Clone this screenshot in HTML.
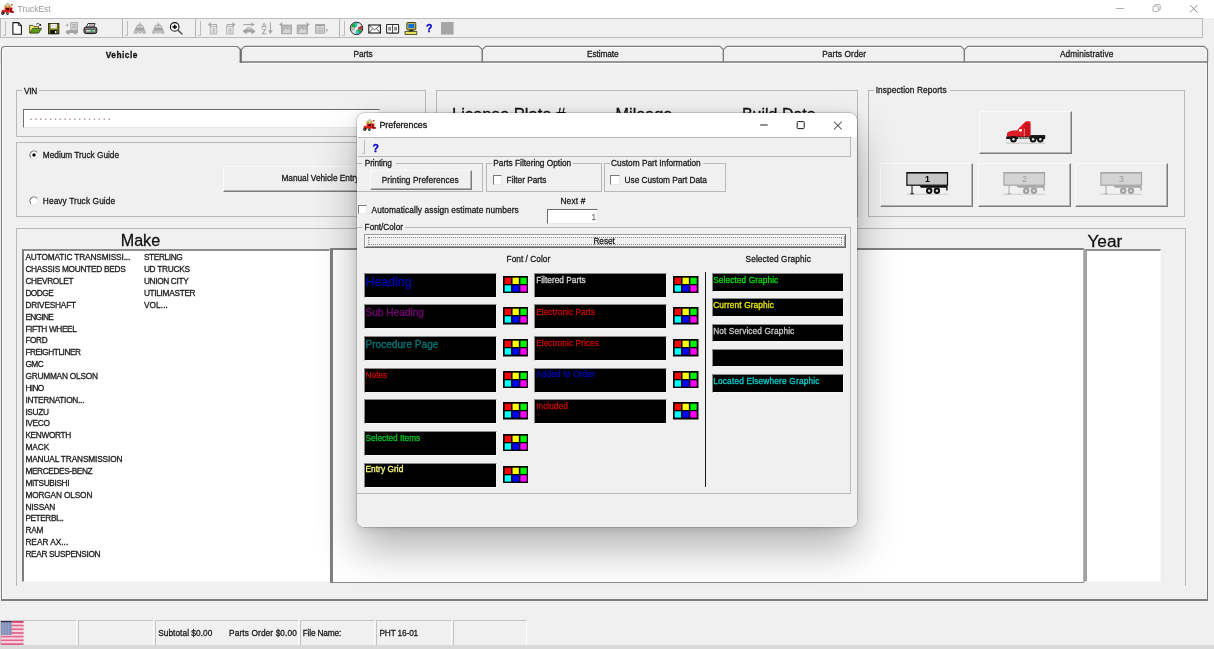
<!DOCTYPE html>
<html lang="en">
<head>
<meta charset="utf-8">
<title>TruckEst</title>
<style>
*{box-sizing:border-box;margin:0;padding:0}
html,body{width:1214px;height:649px;overflow:hidden;background:#f0f0f0}
body{position:relative;font-family:"Liberation Sans",sans-serif;font-size:8.2px;color:#1a1a1a;line-height:10px}
#root{position:absolute;left:0;top:0;width:1214px;height:649px;overflow:hidden;will-change:transform;background:#f0f0f0}
.a{position:absolute}
.t{position:absolute;white-space:nowrap;-webkit-text-stroke:.28px currentColor}
#titlebar{left:0;top:0;width:1214px;height:18px;background:#fff}
#titlebar .ttl{left:17.5px;top:4px;font-size:8.5px;line-height:11px;color:#989898;-webkit-text-stroke:0}
#toolbar{left:0;top:18px;width:1203px;height:20px;background:#f0f0f0;border:1px solid #bcbcbc}
.grip{position:absolute;top:21px;width:3px;height:14.5px;border-right:1.5px solid #bdbdbd;border-bottom:1px solid #c4c4c4}
.tsep{position:absolute;top:19px;width:1px;height:18px;background:#b4b4b4}
#panel{left:.5px;top:62px;width:1207.5px;height:538.5px;border-left:1px solid #7c7c7c;border-right:1.5px solid #7a7a7a;border-bottom:2px solid #7e7e7e;box-shadow:inset 1px 0 0 #fcfcfc}
.gb{position:absolute;border:1px solid #b8b8b8}
.gb>.lg{position:absolute;top:-5.5px;left:6.5px;background:#f0f0f0;padding:0 1px;white-space:nowrap;line-height:10px}
.sunk{position:absolute;background:#fff;border-top:1px solid #6a6a6a;border-left:1px solid #6a6a6a;border-right:1px solid #e8e8e8;border-bottom:1px solid #e8e8e8}
.btn{position:absolute;background:#f0f0f0;border-top:1px solid #fafafa;border-left:1px solid #fafafa;border-right:1px solid #8a8a8a;border-bottom:1px solid #8a8a8a;text-align:center;white-space:nowrap}
.cb{position:absolute;width:9.5px;height:9.5px;background:#fff;border:1.3px solid #7a7a7a;border-right:1px solid #e8e8e8;border-bottom:1px solid #e8e8e8}
.sp{position:absolute;top:620px;height:25px;border-left:1px solid #c4c4c4;border-top:1px solid #c4c4c4;border-right:1px solid #fff;line-height:24px;padding-left:3px;white-space:nowrap}
#dialog{left:357px;top:113px;width:500px;height:413.5px;background:#fff;border-radius:7px;overflow:hidden;box-shadow:0 0 0 .5px rgba(0,0,0,.28),0 22px 42px rgba(0,0,0,.30),0 1px 8px rgba(0,0,0,.13)}
#dialog .grip{top:27px}
.bk{position:absolute;background:#000;border-top:1px solid #8a8a8a;border-left:1px solid #8a8a8a;border-right:1px solid #f4f4f4;border-bottom:1px solid #f4f4f4;white-space:nowrap;padding-left:1px;font-size:8.2px;line-height:1.15;overflow:hidden}
.lgm{position:absolute;top:-2px;height:3px;background:#f0f0f0}
.b2{border-right:1px solid #7c7c7c;border-bottom:1px solid #7c7c7c;box-shadow:inset -1px -1px 0 #b4b4b4}

</style>
</head>
<body>
<div id="root">
<!-- ===== main window ===== -->
<div id="titlebar" class="a"><svg class="a" style="left:1px;top:2px" width="14" height="14" viewBox="0 0 14 14">
<path d="M4.2 2.9 L6.7 .4 L9.3 2.9 Z" fill="#bdbdb8"/>
<path d="M3.2 2.7 H10 L10.4 5.9 H2.9 Z" fill="#e6dc84"/>
<rect x="4.4" y="3.6" width="1.2" height="1.2" fill="#5a5a30"/><rect x="7.6" y="3.6" width="1.2" height="1.2" fill="#5a5a30"/>
<path d="M10 1.9 H11.5 V3.6 H10 Z" fill="#e23030"/>
<path d="M3.6 5.4 H11.4 V10.4 H3.6 Z" fill="#e01c1c"/>
<path d="M5.4 6 H8 V8 H5.4 Z" fill="#3a1010"/>
<path d="M9.4 6 H11 V9.2 H13 V10.8 H9.4 Z" fill="#d81818"/>
<path d="M9.8 6.4 V9.8 H12.6" fill="none" stroke="#300" stroke-width=".7"/>
<path d="M.6 8.2 Q2.4 7.2 4 8.4 V11 H.6 Z" fill="#d42020"/>
<circle cx="1.8" cy="11.3" r="1.6" fill="#1c1c1c"/><circle cx="1.8" cy="11.3" r=".55" fill="#b8b8b8"/>
<circle cx="6.4" cy="11.6" r="1.4" fill="#1c1c1c"/><circle cx="6.4" cy="11.6" r=".5" fill="#b8b8b8"/>
</svg><span class="t ttl">TruckEst</span>
<svg class="a" style="left:1110px;top:0" width="104" height="18" viewBox="0 0 104 18"><path d="M6 8.5 H14" stroke="#9a9a9a" stroke-width=".8"/><rect x="43" y="6.2" width="5.4" height="5.4" rx="1" fill="none" stroke="#9a9a9a" stroke-width=".8"/><path d="M44.6 6 V5.2 Q44.6 4.6 45.4 4.6 H49.4 Q50.2 4.6 50.2 5.4 V9.4 Q50.2 10 49.4 10 H48.6" fill="none" stroke="#9a9a9a" stroke-width=".8"/><path d="M80 5 L87.4 12.4 M87.4 5 L80 12.4" stroke="#777" stroke-width=".8"/></svg>
</div>
<div id="toolbar" class="a"></div>
<div class="grip" style="left:3px"></div>
<div class="grip" style="left:125px"></div>
<div class="grip" style="left:198px"></div>
<div class="grip" style="left:342px"></div>
<div class="tsep" style="left:122px"></div>
<div class="tsep" style="left:195px"></div>
<div class="tsep" style="left:339px"></div>
<svg class="a" style="left:0;top:18px" width="460" height="20" viewBox="0 18 460 20"><path d="M12.9 22.6 H18.4 L21.4 25.6 V34.2 H12.9 Z" fill="#fff" stroke="#141414" stroke-width="1.1" stroke-linejoin="round"/><path d="M18.4 22.6 V25.6 H21.4" fill="none" stroke="#141414" stroke-width=".8"/><path d="M29.6 25.4 H33 L34 26.6 H38.6 V32.8 H29.6 Z" fill="#ece874" stroke="#3c3c10" stroke-width=".8" stroke-linejoin="round"/><path d="M29.8 33 L32.6 28.4 H41.6 L38.6 33 Z" fill="#5c9a1c" stroke="#2c4410" stroke-width=".8" stroke-linejoin="round"/><path d="M36 24.4 Q37.6 22.6 39.4 24" fill="none" stroke="#222" stroke-width=".8"/><circle cx="40.2" cy="25" r="1" fill="#111"/><rect x="48.5" y="23.5" width="10.4" height="10.4" fill="#74740e" stroke="#26260a" stroke-width=".9"/><rect x="50.6" y="23.9" width="6.2" height="4.6" fill="#f2f2f2"/><path d="M51.4 25.4 H56 M51.4 26.8 H56" stroke="#c8c8c8" stroke-width=".5"/><rect x="50.4" y="30.2" width="6.8" height="3.6" fill="#0c0c0c"/><rect x="55" y="31" width="1.4" height="2.2" fill="#f4f4f4"/><rect x="70.8" y="22.6" width="6.6" height="7.6" fill="#dadada" stroke="#a4a4a4" stroke-width=".9"/><path d="M72 24.6 H76.4 M72 26.2 H76.4 M72 27.8 H76.4" stroke="#a4a4a4" stroke-width=".8"/><path d="M67.2 23.6 V26.6 M65.7 25.1 H68.7" stroke="#a4a4a4" stroke-width=".9"/><path d="M65.8 31 Q66.6 30 69 30 H78 V33 H65.8 Z" fill="#a4a4a4"/><circle cx="68.2" cy="33" r="1.5" fill="#a4a4a4"/><circle cx="75.2" cy="33" r="1.5" fill="#a4a4a4"/><path d="M88 23.5 H95 L93.6 27.4 H86.2 Z" fill="#fff" stroke="#1c1c1c" stroke-width=".9" stroke-linejoin="round"/><path d="M89 24.8 L93.8 24.8 M88.4 26 H93.2" stroke="#444" stroke-width=".6"/><path d="M84 29 Q84 27 86.2 27 H94.6 Q96.8 27 96.8 29 V31.6 Q96.8 33.6 94.6 33.6 H86.2 Q84 33.6 84 31.6 Z" fill="#7c7c7c" stroke="#161616" stroke-width="1"/><rect x="85.4" y="29.8" width="9.8" height="2.2" fill="#d8d8d8" stroke="#333" stroke-width=".5"/><rect x="90.4" y="30.2" width="3" height="1.5" fill="#1cb43c"/><path d="M135.60000000000002 28 Q136.4 24.2 139.8 24.2 Q143.20000000000002 24.2 144.0 28 L146.20000000000002 32.4 H133.4 Z" fill="#a4a4a4"/><path d="M136.4 27.4 Q137.20000000000002 25.4 139.8 25.4 Q142.4 25.4 143.20000000000002 27.4 Z" fill="#e4e4e4"/><path d="M139.8 22.4 V34.2" stroke="#a4a4a4" stroke-width=".9"/><path d="M134.4 31.2 H145.20000000000002" stroke="#d0d0d0" stroke-width=".9"/><path d="M133.8 32.2 H137.20000000000002 V33.8 H133.8 Z M142.4 32.2 H145.8 V33.8 H142.4 Z" fill="#b4b4b4"/><path d="M154.0 28 Q154.79999999999998 24.2 158.2 24.2 Q161.6 24.2 162.39999999999998 28 L164.6 32.4 H151.79999999999998 Z" fill="#a4a4a4"/><path d="M154.79999999999998 27.4 Q155.6 25.4 158.2 25.4 Q160.79999999999998 25.4 161.6 27.4 Z" fill="#e4e4e4"/><path d="M158.2 22.4 V34.2" stroke="#a4a4a4" stroke-width=".9"/><path d="M152.79999999999998 31.2 H163.6" stroke="#d0d0d0" stroke-width=".9"/><path d="M152.2 32.2 H155.6 V33.8 H152.2 Z M160.79999999999998 32.2 H164.2 V33.8 H160.79999999999998 Z" fill="#b4b4b4"/><circle cx="174.7" cy="26.9" r="4.3" fill="#fff" stroke="#111" stroke-width="1.1"/><path d="M174.7 24.7 V29.1 M172.5 26.9 H176.9" stroke="#111" stroke-width="1.7"/><path d="M177.9 30.1 L182 34" stroke="#505050" stroke-width="1.5" stroke-linecap="round"/><rect x="210.2" y="26.4" width="6.6" height="7.6" fill="#e6e6e6" stroke="#b0b0b0" stroke-width=".9"/><path d="M211.8 29 H215.4 M211.8 30.6 H215.4 M211.8 32.2 H215.4 M213.6 28 V33.4" stroke="#b4b4b4" stroke-width=".6"/><path d="M210.6 24.6 H216.6 V26.4" fill="none" stroke="#a4a4a4" stroke-width="1"/><path d="M210.8 22.2 V27 L207.8 24.6 Z" fill="#a4a4a4"/><rect x="226.6" y="26.4" width="6.6" height="7.6" fill="#e6e6e6" stroke="#b0b0b0" stroke-width=".9"/><path d="M228.2 29 H231.8 M228.2 30.6 H231.8 M228.2 32.2 H231.8 M230 28 V33.4" stroke="#b4b4b4" stroke-width=".6"/><path d="M227 26.4 V24.6 H232.6" fill="none" stroke="#a4a4a4" stroke-width="1"/><path d="M232.4 22.2 V27 L235.4 24.6 Z" fill="#a4a4a4"/><path d="M243.4 24.6 H252" stroke="#a4a4a4" stroke-width="1.1"/><path d="M251.4 22.6 V26.6 L254.8 24.6 Z" fill="#a4a4a4"/><path d="M243 31 Q243 29.6 245.2 29.4 Q246.8 27.2 249 27.2 Q251.4 27.2 252.8 29.4 Q255.2 29.6 255.2 31 V32.2 H243 Z" fill="#a4a4a4"/><path d="M246.4 29.2 Q247.4 28 249 28 Q250.6 28 251.6 29.2 Z" fill="#d4d4d4"/><circle cx="245.8" cy="32.4" r="1.4" fill="#a4a4a4"/><circle cx="252.4" cy="32.4" r="1.4" fill="#a4a4a4"/><text x="264" y="27.7" text-anchor="middle" style="font:7.6px 'Liberation Sans',sans-serif" fill="#a4a4a4" stroke="#a4a4a4" stroke-width=".25">A</text><text x="264" y="33.9" text-anchor="middle" style="font:7.6px 'Liberation Sans',sans-serif" fill="#a4a4a4" stroke="#a4a4a4" stroke-width=".25">Z</text><path d="M270.4 22.2 V31.4" stroke="#a4a4a4" stroke-width="1"/><path d="M268.2 30.2 H272.6 L270.4 34.2 Z" fill="#a4a4a4"/><rect x="281.4" y="25" width="10.2" height="8.8" fill="#b4b4b4" stroke="#a4a4a4" stroke-width=".8"/><path d="M282.6 32.6 L285.8 28.6 L287.6 30.6 L289.2 29 L290.6 32.6 Z M283 26 L284.4 27.6 M289.8 26 L288 27.8" fill="#d6d6d6" stroke="#d6d6d6" stroke-width=".7"/><path d="M282.2 22.2 V27 L279.2 24.6 Z" fill="#a4a4a4"/><rect x="297.2" y="25" width="10.2" height="8.8" fill="#b4b4b4" stroke="#a4a4a4" stroke-width=".8"/><path d="M298.4 32.6 L301.6 28.6 L303.4 30.6 L305 29 L306.4 32.6 Z M298.8 26 L300.2 27.6 M305.6 26 L303.8 27.8" fill="#d6d6d6" stroke="#d6d6d6" stroke-width=".7"/><path d="M306.6 22.2 V27 L309.6 24.6 Z" fill="#a4a4a4"/><rect x="315.6" y="24.4" width="8.8" height="8.8" fill="#dadada" stroke="#a4a4a4" stroke-width=".9"/><path d="M315.6 25.2 H324.4" stroke="#a4a4a4" stroke-width="1.8"/><path d="M320 26 V28.4 M315.6 28.6 H324.4 M316.6 30.4 H323.4 M316.6 31.8 H323.4" stroke="#a4a4a4" stroke-width=".6"/><path d="M325.8 29.6 H327.4 L326.2 32.6" fill="none" stroke="#a4a4a4" stroke-width=".9"/><circle cx="356.5" cy="28.4" r="6.2" fill="#cfcfcf" stroke="#1a1a1a" stroke-width="1"/><path d="M356.5 28.4 L351.14 26.45 A5.7 5.7 0 0 1 354.55 23.04 Z" fill="#18a838"/><path d="M356.5 28.4 L354.55 23.04 A5.7 5.7 0 0 1 357.98 22.89 Z" fill="#20c8c0"/><path d="M356.5 28.4 L357.98 22.89 A5.7 5.7 0 0 1 361.44 25.55 Z" fill="#e6e6e6"/><path d="M356.5 28.4 L361.44 25.55 A5.7 5.7 0 0 1 361.86 30.35 Z" fill="#c03848"/><path d="M356.5 28.4 L361.86 30.35 A5.7 5.7 0 0 1 359.35 33.34 Z" fill="#18a838"/><path d="M356.5 28.4 L359.35 33.34 A5.7 5.7 0 0 1 355.51 34.01 Z" fill="#20c0c8"/><path d="M356.5 28.4 L355.51 34.01 A5.7 5.7 0 0 1 351.56 31.25 Z" fill="#e0e0e0"/><path d="M356.5 28.4 L351.56 31.25 A5.7 5.7 0 0 1 351.14 26.45 Z" fill="#b8b8b8"/><circle cx="356.5" cy="28.4" r="1.3" fill="#fff"/><rect x="368.8" y="25" width="11.6" height="8" fill="#fff" stroke="#1a1a1a" stroke-width="1.1"/><path d="M368.8 25 L374.6 29.8 L380.4 25 M368.8 33 L372.8 28.6 M380.4 33 L376.4 28.6" fill="none" stroke="#1a1a1a" stroke-width=".7"/><rect x="386.6" y="24.5" width="12" height="8.6" rx=".6" fill="#fff" stroke="#2a2a2a" stroke-width="1.1"/><path d="M392.6 24.5 V33.1" stroke="#2a2a2a" stroke-width=".9"/><rect x="388.2" y="26.8" width="2.8" height="3.8" fill="#8e8e8e"/><rect x="394.2" y="26.8" width="2.8" height="3.8" fill="#8e8e8e"/><rect x="406.8" y="22.5" width="9" height="7.4" rx=".8" fill="#b8b058" stroke="#3a3a10" stroke-width=".9"/><rect x="408.4" y="24" width="5.8" height="4" fill="#1070e8"/><rect x="409.2" y="29.9" width="4.2" height="1.6" fill="#1c1c1c"/><rect x="405" y="31.6" width="11.8" height="2.8" fill="#e6e060" stroke="#3a3a10" stroke-width=".8"/><rect x="441" y="22" width="12.6" height="12.6" fill="#a6a6a6"/></svg>
<div class="t" style="left:426px;top:22px;font-size:10.5px;line-height:13px;font-weight:bold;color:#0000c8">?</div>
<div id="panel" class="a"></div>
<svg class="a" style="left:0;top:44px" width="1214" height="21" viewBox="0 44 1214 21" fill="none"><path d="M242 63.5 H1206" stroke="#fbfbfb" stroke-width="1"/><path d="M241 62 H1207.5" stroke="#787878" stroke-width="1.3"/><path d="M241.2 62 V49.6 L244.6 46.4 H478.90000000000003 L482.3 49.6 V62" stroke="#7c7c7c" stroke-width="1.2" stroke-linejoin="round"/><path d="M244.79999999999998 47.5 H478.7" stroke="#fcfcfc" stroke-width="1"/><path d="M482.3 62 V49.6 L485.7 46.4 H720.0 L723.4 49.6 V62" stroke="#7c7c7c" stroke-width="1.2" stroke-linejoin="round"/><path d="M485.90000000000003 47.5 H719.8" stroke="#fcfcfc" stroke-width="1"/><path d="M723.4 62 V49.6 L726.8 46.4 H961.0 L964.4 49.6 V62" stroke="#7c7c7c" stroke-width="1.2" stroke-linejoin="round"/><path d="M727.0 47.5 H960.8" stroke="#fcfcfc" stroke-width="1"/><path d="M964.4 62 V49.6 L967.8 46.4 H1204.1999999999998 L1207.6 49.6 V62" stroke="#7c7c7c" stroke-width="1.2" stroke-linejoin="round"/><path d="M968.0 47.5 H1204.0" stroke="#fcfcfc" stroke-width="1"/><path d="M1.5 64 V50 Q1.5 46.5 5 46.5 H237.5 L240.4 49.4" stroke="#7c7c7c" stroke-width="1.2"/><path d="M2.6 64 V50.5 Q2.6 47.6 5.5 47.6 H237" stroke="#fcfcfc" stroke-width="1"/><path d="M240.6 49 V63" stroke="#707070" stroke-width="2"/></svg>
<div class="t" style="left:105.80px;top:50.00px;font-size:8.30px;line-height:10px;letter-spacing:0.484px;color:#111;font-weight:bold">Vehicle</div>
<div class="t" style="left:353.40px;top:49.00px;font-size:8.30px;line-height:10px;letter-spacing:-0.015px">Parts</div>
<div class="t" style="left:587.00px;top:49.00px;font-size:8.30px;line-height:10px;letter-spacing:-0.086px">Estimate</div>
<div class="t" style="left:822.20px;top:49.00px;font-size:8.30px;line-height:10px;letter-spacing:0.101px">Parts Order</div>
<div class="t" style="left:1059.90px;top:49.00px;font-size:8.30px;line-height:10px;letter-spacing:0.098px">Administrative</div>
<div class="gb" style="left:16px;top:90px;width:410px;height:47px"><span class="lgm" style="left:5px;width:17px"></span></div>
<div class="t" style="left:23.90px;top:86.00px;font-size:8.30px;line-height:10px;letter-spacing:-0.245px">VIN</div>
<div class="sunk" style="left:23px;top:109px;width:357px;height:19px;border-top:1.5px solid #6a6a6a;border-left:1.5px solid #727272"></div>
<div class="t" style="left:29.8px;top:112px;font-size:9px;line-height:10px;font-weight:bold;letter-spacing:2.38px;color:#a88aa4;-webkit-text-stroke:0">.................</div>
<div class="gb" style="left:436px;top:90px;width:422px;height:127px"></div>
<div class="t" style="left:451.90px;top:105.00px;font-size:16.63px;line-height:19px;color:#111">License Plate #</div>
<div class="t" style="left:615.60px;top:105.00px;font-size:16.22px;line-height:18px;color:#111">Mileage</div>
<div class="t" style="left:741.90px;top:106.00px;font-size:16.00px;line-height:17px;color:#111">Build Date</div>
<div class="gb" style="left:16px;top:142px;width:410px;height:75px"></div>
<svg class="a" style="left:27.6px;top:149.2px" width="12" height="12" viewBox="0 0 12 12"><circle cx="6" cy="6" r="4" fill="#fff"/><path d="M2.9 8.6 A4 4 0 0 1 9.1 3.4" fill="none" stroke="#6e6e6e" stroke-width="1.1"/><path d="M9.1 3.4 A4 4 0 0 1 2.9 8.6" fill="none" stroke="#e2e2e2" stroke-width="1"/><circle cx="6" cy="6" r="1.75" fill="#0c0c0c"/></svg>
<div class="t" style="left:42.80px;top:150.00px;font-size:8.30px;line-height:10px;letter-spacing:-0.015px">Medium Truck Guide</div>
<svg class="a" style="left:27.6px;top:195.0px" width="12" height="12" viewBox="0 0 12 12"><circle cx="6" cy="6" r="4" fill="#fff"/><path d="M2.9 8.6 A4 4 0 0 1 9.1 3.4" fill="none" stroke="#6e6e6e" stroke-width="1.1"/><path d="M9.1 3.4 A4 4 0 0 1 2.9 8.6" fill="none" stroke="#e2e2e2" stroke-width="1"/></svg>
<div class="t" style="left:42.80px;top:196.00px;font-size:8.30px;line-height:10px;letter-spacing:0.113px">Heavy Truck Guide</div>
<div class="btn b2" style="left:223px;top:166px;width:200px;height:26px"></div>
<div class="t" style="left:281.40px;top:173.00px;font-size:8.30px;line-height:10px;letter-spacing:-0.009px">Manual Vehicle Entry</div>
<div class="gb" style="left:868px;top:90px;width:317px;height:127px"><span class="lgm" style="left:5px;width:76px"></span></div>
<div class="t" style="left:875.70px;top:85.00px;font-size:8.30px;line-height:10px;letter-spacing:0.100px">Inspection Reports</div>
<div class="btn b2" style="left:979px;top:111px;width:93px;height:43px"></div>
<div class="btn b2" style="left:880px;top:163px;width:93px;height:43.5px"></div>
<div class="btn b2" style="left:977.5px;top:163px;width:93px;height:43.5px"></div>
<div class="btn b2" style="left:1075px;top:163px;width:93px;height:43.5px"></div>
<svg class="a" style="left:1000px;top:116px" width="52" height="32" viewBox="1000 116 52 32">
<path d="M1006 143.2 H1045.4" stroke="#c4c4c4" stroke-width="1"/>
<path d="M1018 129 L1025.8 121.2 H1030.4 V137.4 H1018 Z" fill="#dc1822"/>
<path d="M1024.6 123.4 H1030.4 V137 H1024.6 Z" fill="#c8121c"/>
<path d="M1024.4 128.6 V136.6" stroke="#f0a0a0" stroke-width=".7"/>
<path d="M1018.6 131.4 L1019.6 129 H1021.8 V131.4 Z" fill="#fff"/>
<path d="M1007 133 Q1009 131 1013 130.6 L1018 130.2 V137.6 H1007 Z" fill="#e01c24"/>
<path d="M1006.2 136.6 H1045.2 V139 H1006.2 Z" fill="#1a1a1a"/>
<path d="M1018 137.4 H1029.4 V138.6 H1018 Z" fill="#e8e8e8"/>
<path d="M1020.6 137.4 V138.6 M1023.4 137.4 V138.6 M1026.2 137.4 V138.6" stroke="#222" stroke-width=".7"/>
<path d="M1030.4 135 H1045.2 V137 H1030.4 Z" fill="#222"/>
<circle cx="1013.5" cy="139.2" r="3.3" fill="#111"/><circle cx="1013.5" cy="139.2" r="1.2" fill="#e4e4e4"/>
<circle cx="1033.1" cy="139.2" r="3.3" fill="#111"/><circle cx="1033.1" cy="139.2" r="1.2" fill="#e4e4e4"/>
<circle cx="1040.3" cy="139.2" r="3.3" fill="#111"/><circle cx="1040.3" cy="139.2" r="1.2" fill="#e4e4e4"/>
</svg>
<svg class="a" style="left:905px;top:171px" width="46" height="26" viewBox="0 0 46 26">
<path d="M1.4 23.3 H43.4" stroke="#cacaca" stroke-width=".9"/>
<rect x="1.9" y="1.6" width="40.6" height="12.6" fill="#c6c6c6" stroke="#0c0c0c" stroke-width="1.2"/>
<path d="M1.9 1.8 H42.5" stroke="#0c0c0c" stroke-width="1.6"/>
<path d="M7 14.4 V22.6 M5.4 22.8 H8.8" stroke="#0c0c0c" stroke-width="1"/>
<path d="M14.4 14.4 H42.6 V19.6 H41.2 V16.8 H16 Z" fill="#0c0c0c"/>
<circle cx="24.2" cy="19.7" r="3.2" fill="#0c0c0c"/><circle cx="24.2" cy="19.7" r="1.25" fill="#d8d8d8"/>
<circle cx="31.9" cy="19.7" r="3.2" fill="#0c0c0c"/><circle cx="31.9" cy="19.7" r="1.25" fill="#d8d8d8"/>
<text x="22.4" y="11.2" text-anchor="middle" style="font:bold 8.8px 'Liberation Sans',sans-serif" fill="#000">1</text>
</svg>
<svg class="a" style="left:1002px;top:171px" width="46" height="26" viewBox="0 0 46 26">
<path d="M1.4 23.3 H43.4" stroke="#cacaca" stroke-width=".9"/>
<rect x="1.9" y="1.6" width="40.6" height="12.6" fill="#d4d4d4" stroke="#a6a6a6" stroke-width="1.2"/>
<path d="M1.9 1.8 H42.5" stroke="#a6a6a6" stroke-width="1.6"/>
<path d="M7 14.4 V22.6 M5.4 22.8 H8.8" stroke="#a6a6a6" stroke-width="1"/>
<path d="M14.4 14.4 H42.6 V19.6 H41.2 V16.8 H16 Z" fill="#a6a6a6"/>
<circle cx="24.2" cy="19.7" r="3.2" fill="#a0a0a0"/><circle cx="24.2" cy="19.7" r="1.25" fill="#dcdcdc"/>
<circle cx="31.9" cy="19.7" r="3.2" fill="#a0a0a0"/><circle cx="31.9" cy="19.7" r="1.25" fill="#dcdcdc"/>
<text x="22.4" y="11.2" text-anchor="middle" style="font:normal 8.8px 'Liberation Sans',sans-serif" fill="#9c9c9c">2</text>
</svg>
<svg class="a" style="left:1099px;top:171px" width="46" height="26" viewBox="0 0 46 26">
<path d="M1.4 23.3 H43.4" stroke="#cacaca" stroke-width=".9"/>
<rect x="1.9" y="1.6" width="40.6" height="12.6" fill="#d4d4d4" stroke="#a6a6a6" stroke-width="1.2"/>
<path d="M1.9 1.8 H42.5" stroke="#a6a6a6" stroke-width="1.6"/>
<path d="M7 14.4 V22.6 M5.4 22.8 H8.8" stroke="#a6a6a6" stroke-width="1"/>
<path d="M14.4 14.4 H42.6 V19.6 H41.2 V16.8 H16 Z" fill="#a6a6a6"/>
<circle cx="24.2" cy="19.7" r="3.2" fill="#a0a0a0"/><circle cx="24.2" cy="19.7" r="1.25" fill="#dcdcdc"/>
<circle cx="31.9" cy="19.7" r="3.2" fill="#a0a0a0"/><circle cx="31.9" cy="19.7" r="1.25" fill="#dcdcdc"/>
<text x="22.4" y="11.2" text-anchor="middle" style="font:normal 8.8px 'Liberation Sans',sans-serif" fill="#9c9c9c">3</text>
</svg>
<div class="gb" style="left:16px;top:228px;width:1170px;height:358px;border-bottom:none"></div>
<div class="t" style="left:120.70px;top:231.00px;font-size:16.15px;line-height:18px;color:#111">Make</div>
<div class="t" style="left:1087.40px;top:231.00px;font-size:17.27px;line-height:20px;color:#111">Year</div>
<div class="a" style="left:22px;top:249px;width:308px;height:333px;background:#fff;border-left:2px solid #7e7e7e;border-top:2px solid #8e8e8e;border-right:1px solid #f8f8f8;border-bottom:1px solid #f8f8f8"></div>
<div class="a" style="left:330px;top:248px;width:754px;height:335px;background:#fff;border-left:3px solid #808080;border-top:2px solid #828282;border-right:1px solid #b4b4b4;border-bottom:1px solid #8c8c8c"></div>
<div class="a" style="left:1084px;top:249px;width:77px;height:333px;background:#fff;border-left:3px solid #a2a2a2;border-top:2px solid #909090;border-right:1px solid #f8f8f8;border-bottom:1px solid #f8f8f8"></div>
<div class="t" style="left:25.40px;top:252.00px;font-size:8.30px;line-height:10px;letter-spacing:-0.135px">AUTOMATIC TRANSMISSI...</div>
<div class="t" style="left:25.40px;top:264.00px;font-size:8.30px;line-height:10px;letter-spacing:-0.271px">CHASSIS MOUNTED BEDS</div>
<div class="t" style="left:25.40px;top:276.00px;font-size:8.30px;line-height:10px;letter-spacing:-0.326px">CHEVROLET</div>
<div class="t" style="left:25.40px;top:288.00px;font-size:8.30px;line-height:10px;letter-spacing:-0.527px">DODGE</div>
<div class="t" style="left:25.40px;top:300.00px;font-size:8.30px;line-height:10px;letter-spacing:-0.207px">DRIVESHAFT</div>
<div class="t" style="left:25.40px;top:312.00px;font-size:8.30px;line-height:10px;letter-spacing:-0.670px">ENGINE</div>
<div class="t" style="left:25.40px;top:324.00px;font-size:8.30px;line-height:10px;letter-spacing:-0.385px">FIFTH WHEEL</div>
<div class="t" style="left:25.40px;top:335.00px;font-size:8.30px;line-height:10px;letter-spacing:-0.404px">FORD</div>
<div class="t" style="left:25.40px;top:347.00px;font-size:8.30px;line-height:10px;letter-spacing:-0.481px">FREIGHTLINER</div>
<div class="t" style="left:25.40px;top:359.00px;font-size:8.30px;line-height:10px;letter-spacing:-0.488px">GMC</div>
<div class="t" style="left:25.40px;top:371.00px;font-size:8.30px;line-height:10px;letter-spacing:-0.213px">GRUMMAN OLSON</div>
<div class="t" style="left:25.40px;top:383.00px;font-size:8.30px;line-height:10px;letter-spacing:-0.637px">HINO</div>
<div class="t" style="left:25.40px;top:395.00px;font-size:8.30px;line-height:10px;letter-spacing:-0.268px">INTERNATION...</div>
<div class="t" style="left:25.40px;top:407.00px;font-size:8.30px;line-height:10px;letter-spacing:-0.340px">ISUZU</div>
<div class="t" style="left:25.40px;top:418.00px;font-size:8.30px;line-height:10px;letter-spacing:-0.326px">IVECO</div>
<div class="t" style="left:25.40px;top:430.00px;font-size:8.30px;line-height:10px;letter-spacing:-0.346px">KENWORTH</div>
<div class="t" style="left:25.40px;top:442.00px;font-size:8.30px;line-height:10px;letter-spacing:-0.045px">MACK</div>
<div class="t" style="left:25.40px;top:454.00px;font-size:8.30px;line-height:10px;letter-spacing:-0.138px">MANUAL TRANSMISSION</div>
<div class="t" style="left:25.40px;top:466.00px;font-size:8.30px;line-height:10px;letter-spacing:-0.388px">MERCEDES-BENZ</div>
<div class="t" style="left:25.40px;top:478.00px;font-size:8.30px;line-height:10px;letter-spacing:-0.370px">MITSUBISHI</div>
<div class="t" style="left:25.40px;top:490.00px;font-size:8.30px;line-height:10px;letter-spacing:-0.151px">MORGAN OLSON</div>
<div class="t" style="left:25.40px;top:502.00px;font-size:8.30px;line-height:10px;letter-spacing:-0.184px">NISSAN</div>
<div class="t" style="left:25.40px;top:513.00px;font-size:8.30px;line-height:10px;letter-spacing:-0.433px">PETERBI...</div>
<div class="t" style="left:25.40px;top:525.00px;font-size:8.30px;line-height:10px;letter-spacing:-0.248px">RAM</div>
<div class="t" style="left:25.40px;top:537.00px;font-size:8.30px;line-height:10px;letter-spacing:-0.010px">REAR AX...</div>
<div class="t" style="left:25.40px;top:549.00px;font-size:8.30px;line-height:10px;letter-spacing:-0.326px">REAR SUSPENSION</div>
<div class="t" style="left:143.90px;top:252.00px;font-size:8.30px;line-height:10px;letter-spacing:-0.376px">STERLING</div>
<div class="t" style="left:143.90px;top:264.00px;font-size:8.30px;line-height:10px;letter-spacing:-0.274px">UD TRUCKS</div>
<div class="t" style="left:143.90px;top:276.00px;font-size:8.30px;line-height:10px;letter-spacing:-0.346px">UNION CITY</div>
<div class="t" style="left:143.90px;top:288.00px;font-size:8.30px;line-height:10px;letter-spacing:-0.316px">UTILIMASTER</div>
<div class="t" style="left:143.90px;top:300.00px;font-size:8.30px;line-height:10px;letter-spacing:0.096px">VOL...</div>
<div class="a" style="left:0;top:645px;width:1214px;height:4px;background:#d9d9d9"></div>
<div class="sp" style="left:0px;width:77px"></div>
<div class="sp" style="left:78px;width:76px"></div>
<div class="sp" style="left:155px;width:144px"></div>
<div class="sp" style="left:300px;width:75px"></div>
<div class="sp" style="left:376px;width:76px"></div>
<div class="sp" style="left:453px;width:74px"></div>
<div class="t" style="left:158.20px;top:628.00px;font-size:8.30px;line-height:10px;letter-spacing:0.048px">Subtotal $0.00</div>
<div class="t" style="left:229.10px;top:628.00px;font-size:8.30px;line-height:10px;letter-spacing:0.113px">Parts Order $0.00</div>
<div class="t" style="left:302.70px;top:628.00px;font-size:8.30px;line-height:10px;letter-spacing:-0.173px">File Name:</div>
<div class="t" style="left:379.40px;top:628.00px;font-size:8.30px;line-height:10px;letter-spacing:-0.143px">PHT 16-01</div>
<svg class="a" style="left:1.4px;top:621px" width="22.6" height="24" viewBox="0 0 22.6 24"><rect x="0" y="0.00" width="22.6" height="1.9" fill="#d23a6c"/><rect x="0" y="1.85" width="22.6" height="1.9" fill="#f8d2dc"/><rect x="0" y="3.69" width="22.6" height="1.9" fill="#e0668e"/><rect x="0" y="5.54" width="22.6" height="1.9" fill="#f8d2dc"/><rect x="0" y="7.38" width="22.6" height="1.9" fill="#e0668e"/><rect x="0" y="9.23" width="22.6" height="1.9" fill="#f8d2dc"/><rect x="0" y="11.08" width="22.6" height="1.9" fill="#e0668e"/><rect x="0" y="12.92" width="22.6" height="1.9" fill="#f8d2dc"/><rect x="0" y="14.77" width="22.6" height="1.9" fill="#e0668e"/><rect x="0" y="16.61" width="22.6" height="1.9" fill="#f8d2dc"/><rect x="0" y="18.46" width="22.6" height="1.9" fill="#e0668e"/><rect x="0" y="20.31" width="22.6" height="1.9" fill="#f8d2dc"/><rect x="0" y="22.15" width="22.6" height="1.9" fill="#e0668e"/><rect x="0" y="0" width="10.6" height="14" fill="#8391b9"/><rect x="0" y="0" width="10.6" height="1.3" fill="#2c2c4c"/><path d="M2 1.3 V14 M4.8 1.3 V14 M7.6 1.3 V14" stroke="#98a6c8" stroke-width="1"/></svg>
<!-- ===== Preferences dialog ===== -->
<div id="dialog" class="a"><svg class="a" style="left:6px;top:5px" width="14" height="14" viewBox="0 0 14 14">
<path d="M4.2 2.9 L6.7 .4 L9.3 2.9 Z" fill="#bdbdb8"/>
<path d="M3.2 2.7 H10 L10.4 5.9 H2.9 Z" fill="#e6dc84"/>
<rect x="4.4" y="3.6" width="1.2" height="1.2" fill="#5a5a30"/><rect x="7.6" y="3.6" width="1.2" height="1.2" fill="#5a5a30"/>
<path d="M10 1.9 H11.5 V3.6 H10 Z" fill="#e23030"/>
<path d="M3.6 5.4 H11.4 V10.4 H3.6 Z" fill="#e01c1c"/>
<path d="M5.4 6 H8 V8 H5.4 Z" fill="#3a1010"/>
<path d="M9.4 6 H11 V9.2 H13 V10.8 H9.4 Z" fill="#d81818"/>
<path d="M9.8 6.4 V9.8 H12.6" fill="none" stroke="#300" stroke-width=".7"/>
<path d="M.6 8.2 Q2.4 7.2 4 8.4 V11 H.6 Z" fill="#d42020"/>
<circle cx="1.8" cy="11.3" r="1.6" fill="#1c1c1c"/><circle cx="1.8" cy="11.3" r=".55" fill="#b8b8b8"/>
<circle cx="6.4" cy="11.6" r="1.4" fill="#1c1c1c"/><circle cx="6.4" cy="11.6" r=".5" fill="#b8b8b8"/>
</svg>
<div class="t" style="left:22.40px;top:7.00px;font-size:8.90px;line-height:10px;color:#111">Preferences</div>
<svg class="a" style="left:395px;top:0" width="104" height="24" viewBox="0 0 104 24"><path d="M8.2 12 H15.6" stroke="#1a1a1a" stroke-width="1"/><rect x="45.2" y="8.6" width="7" height="7" rx=".9" fill="none" stroke="#1a1a1a" stroke-width="1"/><path d="M82 8.7 L89.8 16.4 M89.8 8.7 L82 16.4" stroke="#1a1a1a" stroke-width="1"/></svg>
<div class="a" style="left:0;top:24px;width:500px;height:390px;background:#f0f0f0"></div>
<div class="a" style="left:1px;top:24px;width:493px;height:20px;border:1px solid #b8b8b8;border-left:none"></div>
<div class="grip" style="left:4.5px;top:27px;height:14px"></div>
<div class="t" style="left:15.5px;top:28.5px;font-size:10.5px;line-height:13px;font-weight:bold;color:#0000c8">?</div>
<div class="gb" style="left:0;top:50px;width:126px;height:29px;border-left:none"><span class="lgm" style="left:5px;width:34px"></span></div>
<div class="t" style="left:7.80px;top:45.00px;font-size:8.30px;line-height:10px;letter-spacing:-0.168px">Printing</div>
<div class="btn b2" style="left:13px;top:57px;width:102px;height:20px"></div>
<div class="t" style="left:24.70px;top:62.00px;font-size:8.30px;line-height:10px;letter-spacing:0.090px">Printing Preferences</div>
<div class="gb" style="left:129px;top:50px;width:116px;height:29px"><span class="lgm" style="left:5px;width:81px"></span></div>
<div class="t" style="left:136.30px;top:45.00px;font-size:8.30px;line-height:10px">Parts Filtering Option</div>
<div class="cb" style="left:135.5px;top:62px"></div>
<div class="t" style="left:149.60px;top:62.00px;font-size:8.30px;line-height:10px;letter-spacing:-0.019px">Filter Parts</div>
<div class="gb" style="left:247px;top:50px;width:122px;height:29px"><span class="lgm" style="left:5px;width:93px"></span></div>
<div class="t" style="left:254.10px;top:45.00px;font-size:8.30px;line-height:10px;letter-spacing:-0.015px">Custom Part Information</div>
<div class="cb" style="left:253px;top:62px"></div>
<div class="t" style="left:267.60px;top:62.00px;font-size:8.30px;line-height:10px;letter-spacing:-0.036px">Use Custom Part Data</div>
<div class="cb" style="left:0.5px;top:91.5px"></div>
<div class="t" style="left:14.60px;top:92.00px;font-size:8.30px;line-height:10px;letter-spacing:0.088px">Automatically assign estimate numbers</div>
<div class="t" style="left:203.40px;top:83.00px;font-size:8.30px;line-height:10px;letter-spacing:0.219px">Next #</div>
<div class="sunk" style="left:190px;top:95.5px;width:50.5px;height:15.5px"></div>
<div class="t" style="left:234.40px;top:99.00px;font-size:8.30px;line-height:10px;letter-spacing:-0.417px;color:#858585">1</div>
<div class="gb" style="left:0;top:114px;width:494px;height:267px;border-left:none"><span class="lgm" style="left:5px;width:43px"></span></div>
<div class="t" style="left:7.60px;top:109.00px;font-size:8.30px;line-height:10px;letter-spacing:-0.035px">Font/Color</div>
<div class="btn" style="left:7px;top:121px;width:482px;height:14px;border:1px solid #686868;border-top-color:#9a9a9a;border-left-color:#9a9a9a;box-shadow:inset 1px 1px 0 #fff,inset -1px -1px 0 #989898"><div class="a" style="left:3px;top:2px;right:3px;bottom:2px;border:1px dotted #8c8c8c"></div></div>
<div class="t" style="left:236.40px;top:123.00px;font-size:8.30px;line-height:10px;letter-spacing:-0.056px">Reset</div>
<div class="t" style="left:149.60px;top:141.00px;font-size:8.30px;line-height:10px;letter-spacing:0.020px">Font / Color</div>
<div class="t" style="left:388.50px;top:141.00px;font-size:8.30px;line-height:10px;letter-spacing:0.114px">Selected Graphic</div>
<div class="bk" style="left:7px;top:159.60px;width:132.5px;height:25px"></div>
<div class="t" style="left:8.50px;top:162.00px;font-size:12.38px;line-height:14px;color:#0000bc">Heading</div>
<svg class="a" style="left:145.5px;top:162.7px" width="25.5" height="17.5" viewBox="0 0 25.5 17.5"><rect width="25.5" height="17.5" fill="#000"/><rect x="1.70" y="1.70" width="6.3" height="6.3" fill="#ff0000"/><rect x="9.55" y="1.70" width="6.3" height="6.3" fill="#ffff00"/><rect x="17.40" y="1.70" width="6.3" height="6.3" fill="#00f000"/><rect x="1.70" y="9.30" width="6.3" height="6.3" fill="#00ffff"/><rect x="9.55" y="9.30" width="6.3" height="6.3" fill="#0000ff"/><rect x="17.40" y="9.30" width="6.3" height="6.3" fill="#ff00ff"/></svg>
<div class="bk" style="left:7px;top:191.25px;width:132.5px;height:25px"></div>
<div class="t" style="left:8.50px;top:194.00px;font-size:10.10px;line-height:11px;color:#7a007a">Sub Heading</div>
<svg class="a" style="left:145.5px;top:194.35px" width="25.5" height="17.5" viewBox="0 0 25.5 17.5"><rect width="25.5" height="17.5" fill="#000"/><rect x="1.70" y="1.70" width="6.3" height="6.3" fill="#ff0000"/><rect x="9.55" y="1.70" width="6.3" height="6.3" fill="#ffff00"/><rect x="17.40" y="1.70" width="6.3" height="6.3" fill="#00f000"/><rect x="1.70" y="9.30" width="6.3" height="6.3" fill="#00ffff"/><rect x="9.55" y="9.30" width="6.3" height="6.3" fill="#0000ff"/><rect x="17.40" y="9.30" width="6.3" height="6.3" fill="#ff00ff"/></svg>
<div class="bk" style="left:7px;top:222.90px;width:132.5px;height:25px"></div>
<div class="t" style="left:8.50px;top:226.00px;font-size:10.09px;line-height:11px;color:#007a7a">Procedure Page</div>
<svg class="a" style="left:145.5px;top:226.0px" width="25.5" height="17.5" viewBox="0 0 25.5 17.5"><rect width="25.5" height="17.5" fill="#000"/><rect x="1.70" y="1.70" width="6.3" height="6.3" fill="#ff0000"/><rect x="9.55" y="1.70" width="6.3" height="6.3" fill="#ffff00"/><rect x="17.40" y="1.70" width="6.3" height="6.3" fill="#00f000"/><rect x="1.70" y="9.30" width="6.3" height="6.3" fill="#00ffff"/><rect x="9.55" y="9.30" width="6.3" height="6.3" fill="#0000ff"/><rect x="17.40" y="9.30" width="6.3" height="6.3" fill="#ff00ff"/></svg>
<div class="bk" style="left:7px;top:254.55px;width:132.5px;height:25px"></div>
<div class="t" style="left:8.50px;top:257.00px;font-size:8.30px;line-height:10px;letter-spacing:0.024px;color:#cc0000">Notes</div>
<svg class="a" style="left:145.5px;top:257.65px" width="25.5" height="17.5" viewBox="0 0 25.5 17.5"><rect width="25.5" height="17.5" fill="#000"/><rect x="1.70" y="1.70" width="6.3" height="6.3" fill="#ff0000"/><rect x="9.55" y="1.70" width="6.3" height="6.3" fill="#ffff00"/><rect x="17.40" y="1.70" width="6.3" height="6.3" fill="#00f000"/><rect x="1.70" y="9.30" width="6.3" height="6.3" fill="#00ffff"/><rect x="9.55" y="9.30" width="6.3" height="6.3" fill="#0000ff"/><rect x="17.40" y="9.30" width="6.3" height="6.3" fill="#ff00ff"/></svg>
<div class="bk" style="left:7px;top:286.20px;width:132.5px;height:25px"></div>
<svg class="a" style="left:145.5px;top:289.3px" width="25.5" height="17.5" viewBox="0 0 25.5 17.5"><rect width="25.5" height="17.5" fill="#000"/><rect x="1.70" y="1.70" width="6.3" height="6.3" fill="#ff0000"/><rect x="9.55" y="1.70" width="6.3" height="6.3" fill="#ffff00"/><rect x="17.40" y="1.70" width="6.3" height="6.3" fill="#00f000"/><rect x="1.70" y="9.30" width="6.3" height="6.3" fill="#00ffff"/><rect x="9.55" y="9.30" width="6.3" height="6.3" fill="#0000ff"/><rect x="17.40" y="9.30" width="6.3" height="6.3" fill="#ff00ff"/></svg>
<div class="bk" style="left:7px;top:317.85px;width:132.5px;height:25px"></div>
<div class="t" style="left:8.50px;top:320.00px;font-size:8.30px;line-height:10px;letter-spacing:-0.014px;color:#00c820">Selected Items</div>
<svg class="a" style="left:145.5px;top:320.95px" width="25.5" height="17.5" viewBox="0 0 25.5 17.5"><rect width="25.5" height="17.5" fill="#000"/><rect x="1.70" y="1.70" width="6.3" height="6.3" fill="#ff0000"/><rect x="9.55" y="1.70" width="6.3" height="6.3" fill="#ffff00"/><rect x="17.40" y="1.70" width="6.3" height="6.3" fill="#00f000"/><rect x="1.70" y="9.30" width="6.3" height="6.3" fill="#00ffff"/><rect x="9.55" y="9.30" width="6.3" height="6.3" fill="#0000ff"/><rect x="17.40" y="9.30" width="6.3" height="6.3" fill="#ff00ff"/></svg>
<div class="bk" style="left:7px;top:349.50px;width:132.5px;height:25px"></div>
<div class="t" style="left:8.50px;top:351.00px;font-size:8.30px;line-height:10px;letter-spacing:0.044px;color:#ffff80">Entry Grid</div>
<svg class="a" style="left:145.5px;top:352.6px" width="25.5" height="17.5" viewBox="0 0 25.5 17.5"><rect width="25.5" height="17.5" fill="#000"/><rect x="1.70" y="1.70" width="6.3" height="6.3" fill="#ff0000"/><rect x="9.55" y="1.70" width="6.3" height="6.3" fill="#ffff00"/><rect x="17.40" y="1.70" width="6.3" height="6.3" fill="#00f000"/><rect x="1.70" y="9.30" width="6.3" height="6.3" fill="#00ffff"/><rect x="9.55" y="9.30" width="6.3" height="6.3" fill="#0000ff"/><rect x="17.40" y="9.30" width="6.3" height="6.3" fill="#ff00ff"/></svg>
<div class="bk" style="left:177px;top:159.60px;width:132.5px;height:25px"></div>
<div class="t" style="left:179.20px;top:162.00px;font-size:8.30px;line-height:10px;letter-spacing:0.010px;color:#d8d8d8">Filtered Parts</div>
<svg class="a" style="left:316px;top:162.7px" width="25.5" height="17.5" viewBox="0 0 25.5 17.5"><rect width="25.5" height="17.5" fill="#000"/><rect x="1.70" y="1.70" width="6.3" height="6.3" fill="#ff0000"/><rect x="9.55" y="1.70" width="6.3" height="6.3" fill="#ffff00"/><rect x="17.40" y="1.70" width="6.3" height="6.3" fill="#00f000"/><rect x="1.70" y="9.30" width="6.3" height="6.3" fill="#00ffff"/><rect x="9.55" y="9.30" width="6.3" height="6.3" fill="#0000ff"/><rect x="17.40" y="9.30" width="6.3" height="6.3" fill="#ff00ff"/></svg>
<div class="bk" style="left:177px;top:191.25px;width:132.5px;height:25px"></div>
<div class="t" style="left:179.20px;top:194.00px;font-size:8.30px;line-height:10px;letter-spacing:0.055px;color:#cc0000">Electronic Parts</div>
<svg class="a" style="left:316px;top:194.35px" width="25.5" height="17.5" viewBox="0 0 25.5 17.5"><rect width="25.5" height="17.5" fill="#000"/><rect x="1.70" y="1.70" width="6.3" height="6.3" fill="#ff0000"/><rect x="9.55" y="1.70" width="6.3" height="6.3" fill="#ffff00"/><rect x="17.40" y="1.70" width="6.3" height="6.3" fill="#00f000"/><rect x="1.70" y="9.30" width="6.3" height="6.3" fill="#00ffff"/><rect x="9.55" y="9.30" width="6.3" height="6.3" fill="#0000ff"/><rect x="17.40" y="9.30" width="6.3" height="6.3" fill="#ff00ff"/></svg>
<div class="bk" style="left:177px;top:222.90px;width:132.5px;height:25px"></div>
<div class="t" style="left:179.20px;top:225.00px;font-size:8.30px;line-height:10px;letter-spacing:0.052px;color:#cc0000">Electronic Prices</div>
<svg class="a" style="left:316px;top:226.0px" width="25.5" height="17.5" viewBox="0 0 25.5 17.5"><rect width="25.5" height="17.5" fill="#000"/><rect x="1.70" y="1.70" width="6.3" height="6.3" fill="#ff0000"/><rect x="9.55" y="1.70" width="6.3" height="6.3" fill="#ffff00"/><rect x="17.40" y="1.70" width="6.3" height="6.3" fill="#00f000"/><rect x="1.70" y="9.30" width="6.3" height="6.3" fill="#00ffff"/><rect x="9.55" y="9.30" width="6.3" height="6.3" fill="#0000ff"/><rect x="17.40" y="9.30" width="6.3" height="6.3" fill="#ff00ff"/></svg>
<div class="bk" style="left:177px;top:254.55px;width:132.5px;height:25px"></div>
<div class="t" style="left:179.20px;top:256.00px;font-size:8.30px;line-height:10px;letter-spacing:0.139px;color:#0000c0">Added to Order</div>
<svg class="a" style="left:316px;top:257.65px" width="25.5" height="17.5" viewBox="0 0 25.5 17.5"><rect width="25.5" height="17.5" fill="#000"/><rect x="1.70" y="1.70" width="6.3" height="6.3" fill="#ff0000"/><rect x="9.55" y="1.70" width="6.3" height="6.3" fill="#ffff00"/><rect x="17.40" y="1.70" width="6.3" height="6.3" fill="#00f000"/><rect x="1.70" y="9.30" width="6.3" height="6.3" fill="#00ffff"/><rect x="9.55" y="9.30" width="6.3" height="6.3" fill="#0000ff"/><rect x="17.40" y="9.30" width="6.3" height="6.3" fill="#ff00ff"/></svg>
<div class="bk" style="left:177px;top:286.20px;width:132.5px;height:25px"></div>
<div class="t" style="left:179.20px;top:288.00px;font-size:8.30px;line-height:10px;letter-spacing:0.027px;color:#cc0000">Included</div>
<svg class="a" style="left:316px;top:289.3px" width="25.5" height="17.5" viewBox="0 0 25.5 17.5"><rect width="25.5" height="17.5" fill="#000"/><rect x="1.70" y="1.70" width="6.3" height="6.3" fill="#ff0000"/><rect x="9.55" y="1.70" width="6.3" height="6.3" fill="#ffff00"/><rect x="17.40" y="1.70" width="6.3" height="6.3" fill="#00f000"/><rect x="1.70" y="9.30" width="6.3" height="6.3" fill="#00ffff"/><rect x="9.55" y="9.30" width="6.3" height="6.3" fill="#0000ff"/><rect x="17.40" y="9.30" width="6.3" height="6.3" fill="#ff00ff"/></svg>
<div class="a" style="left:348px;top:159px;width:1px;height:215px;background:#1a1a1a"></div>
<div class="bk" style="left:354.5px;top:160.00px;width:132.5px;height:18.5px"></div>
<div class="t" style="left:356.20px;top:162.00px;font-size:8.30px;line-height:10px;letter-spacing:0.096px;color:#00e000">Selected Graphic</div>
<div class="bk" style="left:354.5px;top:185.30px;width:132.5px;height:18.5px"></div>
<div class="t" style="left:356.20px;top:187.00px;font-size:8.30px;line-height:10px;letter-spacing:0.124px;color:#e8e800">Current Graphic</div>
<div class="bk" style="left:354.5px;top:210.60px;width:132.5px;height:18.5px"></div>
<div class="t" style="left:356.20px;top:213.00px;font-size:8.30px;line-height:10px;letter-spacing:0.116px;color:#c8c8c8">Not Serviced Graphic</div>
<div class="bk" style="left:354.5px;top:235.90px;width:132.5px;height:18.5px"></div>
<div class="bk" style="left:354.5px;top:261.20px;width:132.5px;height:18.5px"></div>
<div class="t" style="left:356.20px;top:263.00px;font-size:8.30px;line-height:10px;letter-spacing:0.181px;color:#00d0d0">Located Elsewhere Graphic</div></div>
</div>
</body>
</html>
